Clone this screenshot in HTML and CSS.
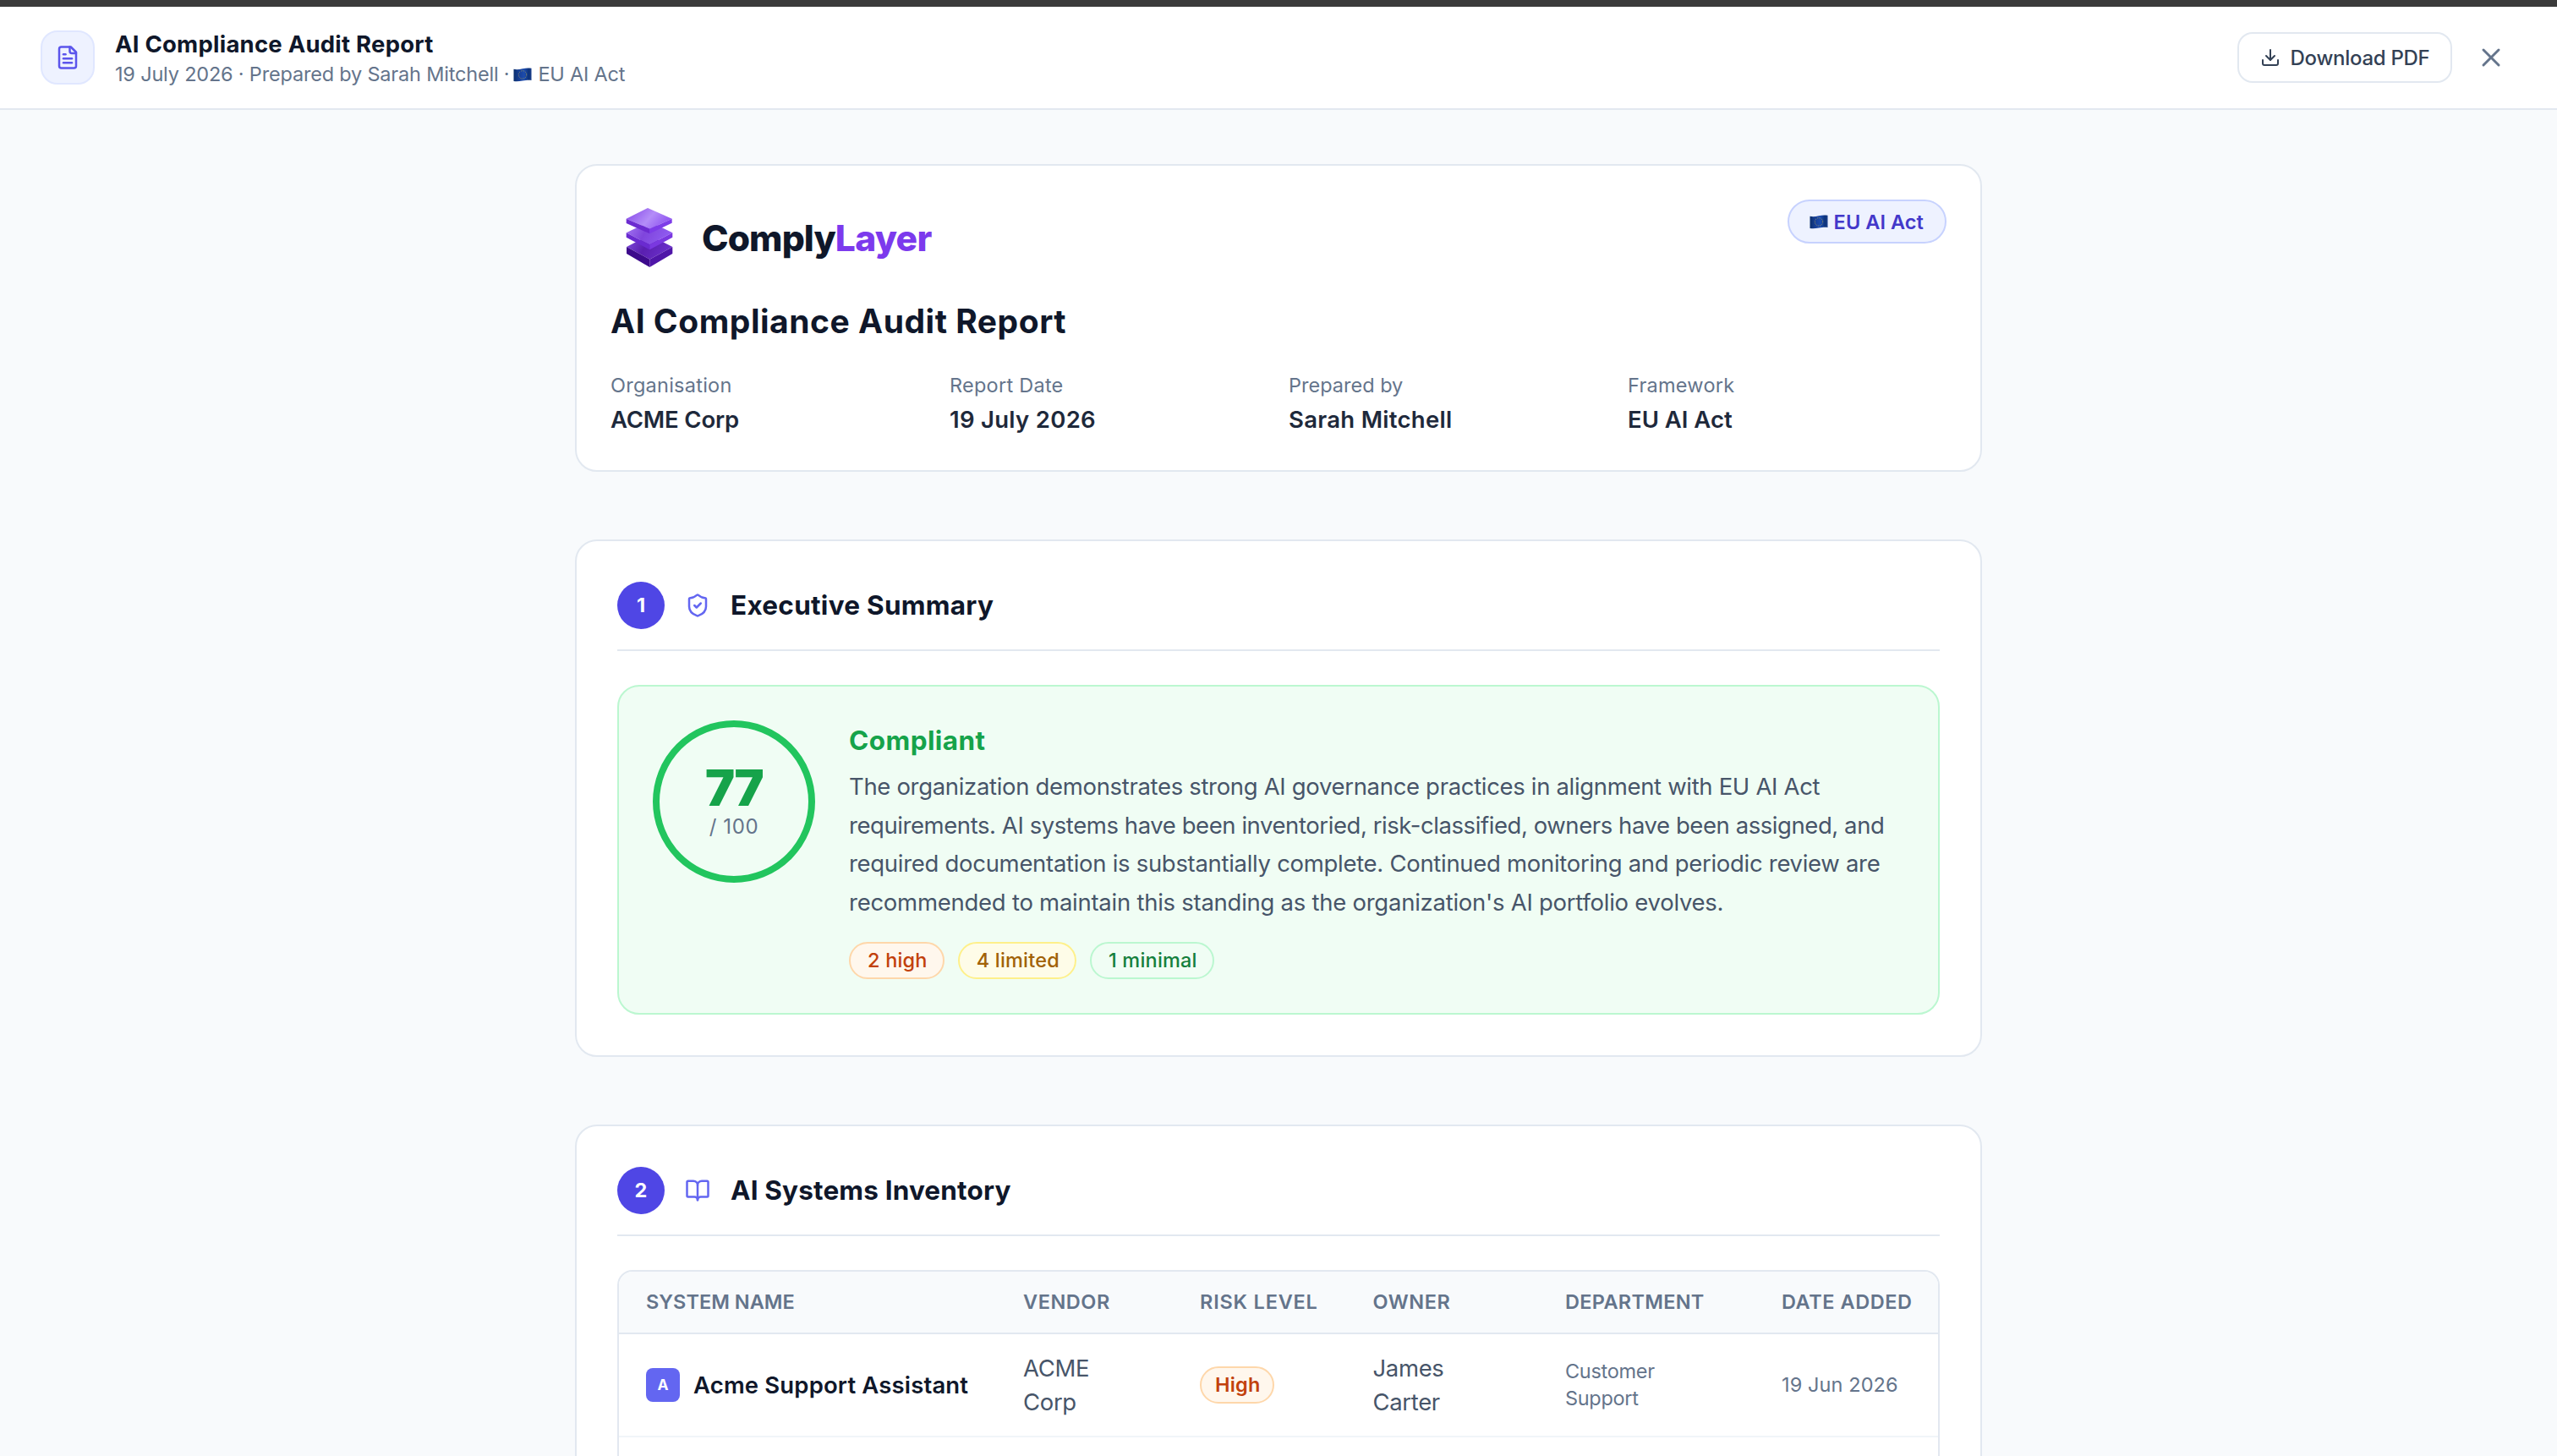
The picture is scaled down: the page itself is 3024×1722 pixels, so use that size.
FILE: index.html
```
<!DOCTYPE html>
<html lang="en">

<head>
    <meta charset="UTF-8">
    <meta name="viewport" content="width=device-width, initial-scale=1.0">
    <title>AI Compliance Audit Report</title>
    <link rel="stylesheet" href="styles.css">
</head>

<body>

    <!-- shared flag symbol -->
    <svg class="defs" width="0" height="0">
        <defs>
            <linearGradient id="flagBlue" x1="0" x2="1" y1="0" y2="0">
                <stop offset="0" stop-color="#0b2f6b" />
                <stop offset="0.3" stop-color="#173f96" />
                <stop offset="0.6" stop-color="#1c4cae" />
                <stop offset="0.85" stop-color="#0c3279" />
                <stop offset="1" stop-color="#1a3f8c" />
            </linearGradient>
            <symbol id="flag" viewBox="0 0 22 17">
                <path d="M0.5 1.8C4 2.600 7 2.200 11 1.300S18 0.400 21.5 0.800V14.900C18 14.500 15 14.800 11 15.500S4 16.700 0.5 15.900Z" fill="url(#flagBlue)" />
                <circle cx="11" cy="8.4" r="4.7" fill="none" stroke="#b9a94e" stroke-width="1" stroke-opacity="0.8" stroke-dasharray="1.1 1.36" />
            </symbol>
        </defs>
    </svg>

    <header class="topbar">
        <div class="topbar-icon">
            <svg class="icon" width="30" height="30" viewBox="0 0 24 24">
                <path d="M15 2H6a2 2 0 0 0-2 2v16a2 2 0 0 0 2 2h12a2 2 0 0 0 2-2V7Z" />
                <path d="M14 2v4a2 2 0 0 0 2 2h4" />
                <path d="M10 9H8" />
                <path d="M16 13H8" />
                <path d="M16 17H8" />
            </svg>
        </div>
        <div class="topbar-text">
            <h1>AI Compliance Audit Report</h1>
            <p><span class="byline">19 July 2026 · Prepared by Sarah Mitchell ·</span><svg class="flag" width="22" height="17"><use href="#flag" /></svg><span>EU AI Act</span></p>
        </div>
        <button class="download">
            <svg class="icon" width="24" height="24" viewBox="0 0 24 24">
                <path d="M21 15v4a2 2 0 0 1-2 2H5a2 2 0 0 1-2-2v-4" />
                <path d="m7 10 5 5 5-5" />
                <path d="M12 15V3" />
            </svg>
            <span>Download PDF</span>
        </button>
        <button class="close">
            <svg class="icon" width="36" height="36" viewBox="0 0 24 24">
                <path d="M18 6 6 18" />
                <path d="m6 6 12 12" />
            </svg>
        </button>
    </header>

    <main class="report">

        <!-- cover -->
        <section class="card cover">
            <div class="cover-top">
                <div class="brand">
                    <svg width="96" height="90" viewBox="-24 0 288 270">
                        <defs>
                            <linearGradient id="top1" x1="0" x2="1" y1="0.3" y2="0.7">
                                <stop offset="0" stop-color="#8b50ea" />
                                <stop offset="0.5" stop-color="#b48df8" />
                                <stop offset="1" stop-color="#8a4cf0" />
                            </linearGradient>
                            <linearGradient id="top2" x1="0" x2="1" y1="0" y2="0.3">
                                <stop offset="0" stop-color="#a77bf5" />
                                <stop offset="0.5" stop-color="#7f45dc" />
                                <stop offset="1" stop-color="#8f5bf0" />
                            </linearGradient>
                            <linearGradient id="top3" x1="0" x2="1" y1="0" y2="0.3">
                                <stop offset="0" stop-color="#8350e0" />
                                <stop offset="0.5" stop-color="#5a1fb0" />
                                <stop offset="1" stop-color="#6a2fc9" />
                            </linearGradient>
                        </defs>
                        <path d="M33 168 114 126 196 168 115 212Z" fill="url(#top3)" />
                        <path d="M33 168 115 212V240L33 192Z" fill="#3d0a8c" />
                        <path d="M196 168 115 212V240L196 192Z" fill="#4f16a8" />
                        <path d="M32 118 114 78 196 118 115 160Z" fill="url(#top2)" />
                        <path d="M32 118 115 160V178L32 134Z" fill="#6a2bd0" />
                        <path d="M196 118 115 160V178L196 134Z" fill="#7a38e0" />
                        <path d="M32 68 108 30 194 68 115 104Z" fill="url(#top1)" />
                        <path d="M32 68 115 104V121L32 84Z" fill="#6c2bd0" />
                        <path d="M194 68 115 104V121L194 83Z" fill="#7d3ce8" />
                    </svg>
                    <div class="brand-name">Comply<span>Layer</span></div>
                </div>
                <div class="framework-badge">
                    <svg class="flag" width="22" height="17"><use href="#flag" /></svg>
                    <span>EU AI Act</span>
                </div>
            </div>
            <h2>AI Compliance Audit Report</h2>
            <dl class="meta">
                <div>
                    <dt>Organisation</dt>
                    <dd class="tight">ACME Corp</dd>
                </div>
                <div>
                    <dt>Report Date</dt>
                    <dd>19 July 2026</dd>
                </div>
                <div>
                    <dt class="tight">Prepared by</dt>
                    <dd>Sarah Mitchell</dd>
                </div>
                <div>
                    <dt>Framework</dt>
                    <dd class="flat">EU AI Act</dd>
                </div>
            </dl>
        </section>

        <!-- 1. summary -->
        <section class="card">
            <div class="section-head">
                <div class="num">1</div>
                <svg class="icon" width="30" height="30" viewBox="0 0 24 24">
                    <path d="M20 13c0 5-3.5 7.5-7.66 8.95a1 1 0 0 1-.67-.01C7.5 20.5 4 18 4 13V6a1 1 0 0 1 1-1c2 0 4.5-1.2 6.24-2.72a1.17 1.17 0 0 1 1.52 0C14.51 3.81 17 5 19 5a1 1 0 0 1 1 1z" />
                    <path d="m9 12 2 2 4-4" />
                </svg>
                <h3>Executive Summary</h3>
            </div>
            <div class="score-box">
                <div class="score-ring">
                    <div class="score">77</div>
                    <div class="score-max">/ 100</div>
                </div>
                <div class="score-text">
                    <h4>Compliant</h4>
                    <p>
                        <span>The organization demonstrates strong AI governance practices in alignment with EU AI Act</span>
                        <span>requirements. AI systems have been inventoried, risk-classified, owners have been assigned, and</span>
                        <span>required documentation is substantially complete. Continued monitoring and periodic review are</span>
                        <span>recommended to maintain this standing as the organization's AI portfolio evolves.</span>
                    </p>
                    <div class="pills">
                        <span class="pill high">2 high</span>
                        <span class="pill limited">4 limited</span>
                        <span class="pill minimal">1 minimal</span>
                    </div>
                </div>
            </div>
        </section>

        <!-- 2. inventory -->
        <section class="card">
            <div class="section-head">
                <div class="num">2</div>
                <svg class="icon" width="30" height="30" viewBox="0 0 24 24">
                    <path d="M12 7v14" />
                    <path d="M3 18a1 1 0 0 1-1-1V4a1 1 0 0 1 1-1h5a4 4 0 0 1 4 4 4 4 0 0 1 4-4h5a1 1 0 0 1 1 1v13a1 1 0 0 1-1 1h-6a3 3 0 0 0-3 3 3 3 0 0 0-3-3z" />
                </svg>
                <h3 class="tight">AI Systems Inventory</h3>
            </div>
            <div class="table">
                <div class="row head">
                    <div class="flat">System Name</div>
                    <div>Vendor</div>
                    <div class="wide">Risk Level</div>
                    <div>Owner</div>
                    <div class="snug">Department</div>
                    <div>Date Added</div>
                </div>
                <div class="row">
                    <div class="system"><span class="avatar">A</span>Acme Support Assistant</div>
                    <div>ACME<br>Corp</div>
                    <div><span class="pill risk">High</span></div>
                    <div>James<br>Carter</div>
                    <div class="small">Customer<br>Support</div>
                    <div class="small date">19 Jun 2026</div>
                </div>
                <div class="row"></div>
            </div>
        </section>

    </main>

</body>

</html>
```

FILE: styles.css
```
* {
    margin: 0;
    padding: 0;
    box-sizing: border-box;
}

body {
    height: 1722px;
    overflow: hidden;
    background: #f8fafc;
    border-top: 8px solid #3b3b3b;
    color: #0f172a;
    font-family: Inter, "Liberation Sans", sans-serif;
    font-size: 27.5px;
}

.defs {
    position: absolute;
}

.icon {
    display: block;
    flex-shrink: 0;
    fill: none;
    stroke: currentColor;
    stroke-width: 2;
    stroke-linecap: round;
    stroke-linejoin: round;
}

.flag {
    display: block;
    flex-shrink: 0;
}

/* top bar */
.topbar {
    display: flex;
    align-items: center;
    height: 122px;
    padding: 0 48px;
    background: white;
    border-bottom: 2px solid #e2e8f0;
}

.topbar-icon {
    display: flex;
    align-items: center;
    justify-content: center;
    width: 64px;
    height: 64px;
    margin-right: 24px;
    background: #eef2ff;
    border: 2px solid #e0e7ff;
    border-radius: 20px;
    color: #5b55ec;
}

.topbar-text {
    flex: 1;
}

.topbar-text h1 {
    font-size: 27.5px;
    font-weight: 700;
    line-height: 40px;
    letter-spacing: 0.23px;
}

.topbar-text p {
    display: flex;
    align-items: center;
    font-size: 23.5px;
    line-height: 32px;
    letter-spacing: -0.2px;
    color: #64748b;
}

.topbar-text .byline {
    letter-spacing: -0.19px;
}

.topbar-text .flag {
    margin: 0 7px 0 5px;
}

.download {
    display: flex;
    align-items: center;
    justify-content: center;
    gap: 12px;
    width: 254px;
    height: 60px;
    background: white;
    border: 2px solid #e2e8f0;
    border-radius: 18px;
    color: #334155;
    font: 500 24px Inter, sans-serif;
    letter-spacing: -0.28px;
}

.close {
    display: flex;
    align-items: center;
    justify-content: center;
    width: 60px;
    height: 60px;
    margin-left: 16px;
    background: none;
    border: none;
    color: #64748b;
}

/* report body */
.report {
    display: flex;
    flex-direction: column;
    gap: 80px;
    height: 1592px;
    padding: 64px 680px 0;
    overflow: hidden;
}

.card {
    flex-shrink: 0;
    padding: 48px;
    background: white;
    border: 2px solid #e2e8f0;
    border-radius: 26px;
}

.cover {
    height: 364px;
    padding: 40px;
}

.cover-top {
    display: flex;
    justify-content: space-between;
    align-items: flex-start;
}

.brand {
    display: flex;
    align-items: center;
    gap: 12px;
}

.brand-name {
    font-size: 42.5px;
    font-weight: 800;
    letter-spacing: -0.9px;
}

.brand-name span {
    color: #7c3aed;
    letter-spacing: -0.7px;
}

.framework-badge {
    display: flex;
    align-items: center;
    gap: 7px;
    height: 52px;
    padding: 0 25px 0 24px;
    background: #eef2ff;
    border: 2px solid #c7d2fe;
    border-radius: 26px;
    color: #4338ca;
    font-size: 23.5px;
    font-weight: 600;
    letter-spacing: 0.08px;
}

.cover h2 {
    margin-top: 28px;
    font-size: 39px;
    font-weight: 700;
    line-height: 52px;
    letter-spacing: 0.52px;
}

.meta {
    display: grid;
    grid-template-columns: repeat(4, 1fr);
    gap: 24px;
    margin-top: 34px;
}

.meta dt {
    font-size: 23.5px;
    line-height: 32px;
    letter-spacing: 0.25px;
    color: #64748b;
}

.meta dd {
    margin-top: 4px;
    font-weight: 600;
    line-height: 40px;
    letter-spacing: 0.29px;
    color: #1e293b;
}

.meta dt.tight,
.meta dd.flat {
    letter-spacing: 0;
}

.meta dd.tight {
    letter-spacing: -0.16px;
}

/* section heading */
.section-head {
    display: flex;
    align-items: center;
    gap: 24px;
    margin-bottom: 40px;
    padding-bottom: 24px;
    border-bottom: 2px solid #e2e8f0;
}

.section-head .icon {
    color: #6366f1;
}

.num {
    width: 56px;
    height: 56px;
    background: #4f46e5;
    border-radius: 50%;
    color: white;
    font-size: 23.5px;
    font-weight: 700;
    line-height: 56px;
    text-align: center;
}

.section-head h3 {
    font-size: 31.5px;
    font-weight: 700;
    line-height: 40px;
    letter-spacing: 0.27px;
}

.section-head h3.tight {
    letter-spacing: 0.16px;
}

/* score */
.score-box {
    display: flex;
    gap: 40px;
    height: 390px;
    padding: 40px;
    background: #f0fdf4;
    border: 2px solid #bbf7d0;
    border-radius: 26px;
}

.score-ring {
    display: flex;
    flex-direction: column;
    align-items: center;
    justify-content: center;
    width: 192px;
    height: 192px;
    border: 8px solid #22c55e;
    border-radius: 50%;
}

.score {
    font-size: 59px;
    font-weight: 900;
    line-height: 60px;
    letter-spacing: -1.7px;
    color: #16a34a;
}

.score-max {
    font-size: 24px;
    line-height: 32px;
    letter-spacing: 0.6px;
    color: #64748b;
}

.score-text h4 {
    margin-bottom: 8px;
    font-size: 31.5px;
    font-weight: 700;
    line-height: 48px;
    letter-spacing: 0.42px;
    color: #16a34a;
}

.score-text p {
    line-height: 45.5px;
    letter-spacing: -0.33px;
    color: #475569;
}

.score-text p span {
    display: block;
    white-space: nowrap;
}

.score-text p span:nth-child(2) {
    letter-spacing: -0.43px;
}

.score-text p span:nth-child(3) {
    letter-spacing: -0.3px;
}

.score-text p span:nth-child(4) {
    letter-spacing: -0.26px;
}

.pills {
    display: flex;
    gap: 16px;
    margin-top: 24px;
}

.pill {
    display: inline-block;
    height: 44px;
    padding: 0 18px 0 20px;
    border: 2px solid;
    border-radius: 22px;
    font-size: 23.5px;
    font-weight: 500;
    line-height: 40px;
    letter-spacing: 0.2px;
}

.high {
    background: #fff7ed;
    border-color: #fed7aa;
    color: #c2410c;
}

.limited {
    background: #fefce8;
    border-color: #fef08a;
    color: #a16207;
}

.minimal {
    background: #f0fdf4;
    border-color: #bbf7d0;
    color: #15803d;
}

/* systems table */
.table {
    border: 2px solid #e2e8f0;
    border-radius: 18px;
    overflow: hidden;
}

.row {
    display: grid;
    grid-template-columns: 446px 209px 204.5px 227.5px 256px 217px;
    align-items: center;
    height: 122px;
    border-bottom: 2px solid #f1f5f9;
    line-height: 40px;
    letter-spacing: -0.35px;
    color: #475569;
}

.row > div {
    padding-left: 32px;
}

.head {
    height: 74px;
    background: #f8fafc;
    border-bottom-color: #e2e8f0;
    color: #64748b;
    font-size: 23.5px;
    font-weight: 600;
    letter-spacing: 0.55px;
    text-transform: uppercase;
}

.head .flat {
    letter-spacing: 0.02px;
}

.head .wide {
    letter-spacing: 0.8px;
}

.head .snug {
    letter-spacing: 0.3px;
}

.row .system {
    display: flex;
    align-items: center;
    gap: 16px;
    color: #0f172a;
    font-weight: 600;
    letter-spacing: 0.15px;
}

.avatar {
    width: 40px;
    height: 40px;
    background: #6366f1;
    border-radius: 8px;
    color: white;
    font-size: 17.5px;
    font-weight: 700;
    line-height: 40px;
    text-align: center;
}

.risk {
    display: block;
    width: 88px;
    padding: 0 16px;
    background: #fff7ed;
    border-color: #fed7aa;
    color: #c2410c;
    font-weight: 600;
}

.row .small {
    font-size: 23.5px;
    line-height: 32px;
    letter-spacing: -0.3px;
    color: #64748b;
}

.row .date {
    letter-spacing: 0.1px;
}
```
